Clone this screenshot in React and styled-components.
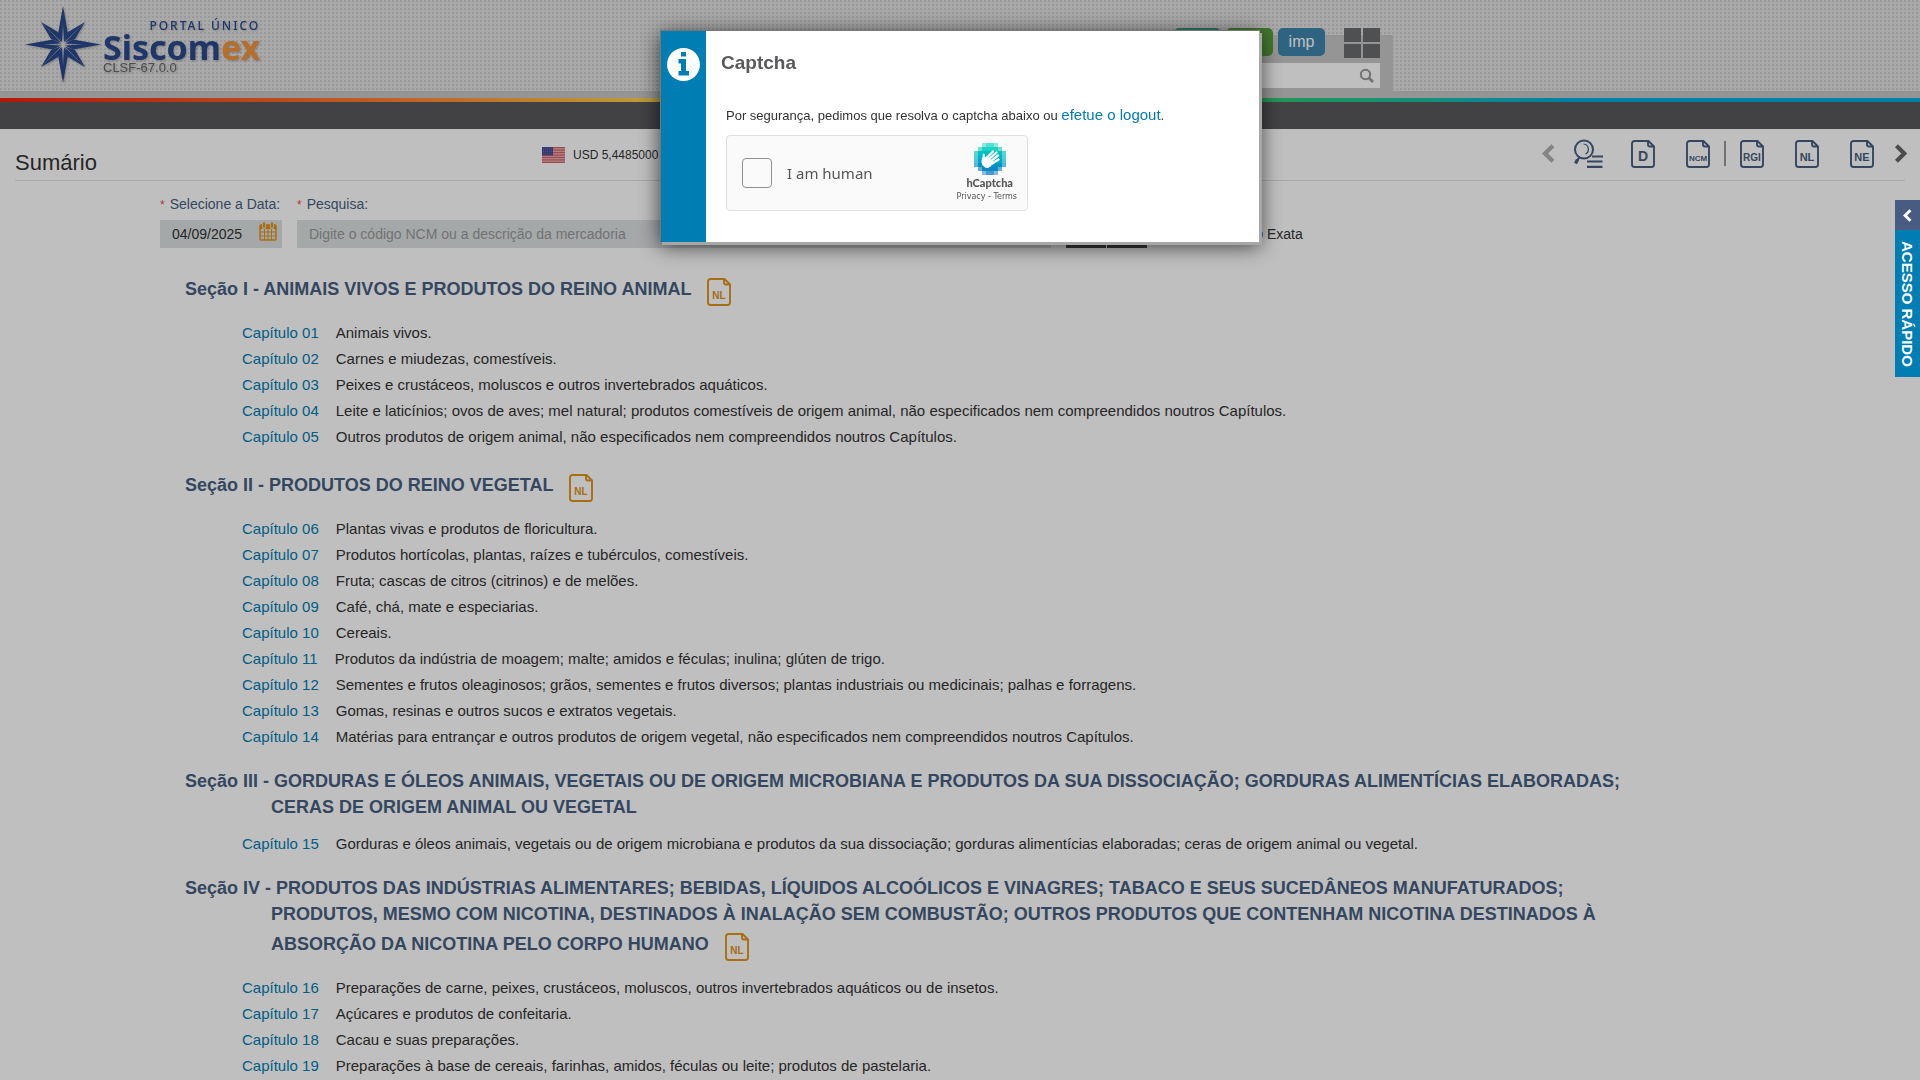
import React from "react";
import styled, { createGlobalStyle } from "styled-components";

const Global = createGlobalStyle`
  * { box-sizing: border-box; }
  body {
    margin: 0;
    background: #fff;
    color: #333;
    font-family: "Liberation Sans", Arial, sans-serif;
    font-size: 15px;
    line-height: 26px;
  }
  html, body { height: 100%; overflow: hidden; }
  h1, h2, p, ul { margin: 0; padding: 0; }
  a { text-decoration: none; }
  button { border: 0; padding: 0; background: none; font: inherit; cursor: pointer; }
`;

const navy = "#475f80";
const blue = "#007db2";
const orange = "#e0931a";

/* ---------- header ---------- */

const Header = styled.header`
  display: flex;
  justify-content: space-between;
  align-items: flex-end;
  height: 98px;
  padding-right: 527px;
  border-bottom: 7px solid #c7c7c7;
  background: conic-gradient(transparent 75%, #cccccc 0) 0 0 / 4px 4px #e2e2e2;
`;

const Brand = styled.a`
  display: flex;
  align-self: flex-start;
  padding: 4px 0 0 23px;
  filter: drop-shadow(1px 1px 1px rgba(0, 0, 0, 0.25));
`;

const BrandText = styled.span`
  display: flex;
  flex-direction: column;
  align-items: flex-start;
  font-family: "Noto Sans", sans-serif;
`;

const Portal = styled.span`
  align-self: flex-end;
  margin-top: 14px;
  font-size: 12px;
  line-height: 16px;
  letter-spacing: 2px;
  font-weight: 500;
  color: #28488c;
`;

const Wordmark = styled.span`
  font-size: 34px;
  line-height: 26px;
  font-weight: 700;
  color: #28488c;
`;

const Accent = styled.span`
  color: #f2943a;
`;

const Version = styled.span`
  font-family: "Liberation Sans", Arial, sans-serif;
  font-size: 13px;
  line-height: 16px;
  color: #666;
`;

const HeaderTools = styled.div`
  display: flex;
  flex-direction: column;
  width: 260px;
  height: 56px;
  padding: 0 13px 3px 0;
  background: #c7c7c7;
`;

const HeaderButtons = styled.div`
  display: flex;
  justify-content: flex-end;
  align-items: flex-start;
  gap: 5px;
  height: 35px;
  margin-top: -7px;
`;

const ProfileButton = styled.button`
  width: 47px;
  height: 28px;
  border-radius: 5px;
  background: ${(p) => p.$color};
  color: #fff;
  font-size: 16px;
  line-height: 28px;
`;

const AppsButton = styled.button`
  display: grid;
  grid-template-columns: 17px 17px;
  gap: 2px;
  margin-left: 14px;
`;

const AppsCell = styled.span`
  height: 14px;
  background: #6a6b6d;
`;

const HeaderSearch = styled.label`
  display: flex;
  align-items: center;
  height: 25px;
  padding-right: 6px;
  background: #fff;
`;

const HeaderInput = styled.input`
  flex: 1;
  min-width: 0;
  border: 0;
  outline: 0;
  background: transparent;
`;

const Rainbow = styled.div`
  height: 4px;
  background: linear-gradient(
    90deg,
    #f1200f 0%,
    #ff8434 21%,
    #fcd14b 34%,
    #8fc94a 50%,
    #2fc770 66%,
    #1cc1a5 74%,
    #00acdf 82%,
    #00acdf 100%
  );
`;

const NavBar = styled.nav`
  height: 27px;
  background: #59595c;
`;

/* ---------- title bar ---------- */

const TitleBar = styled.div`
  display: flex;
  align-items: center;
  height: 52px;
  margin: 0 15px;
  border-bottom: 1px solid #dfdfdf;
`;

const Title = styled.h1`
  flex: 0 0 527px;
  padding-top: 16px;
  font-size: 22px;
  line-height: 26px;
  font-weight: 400;
`;

const Currency = styled.span`
  display: flex;
  align-items: center;
  gap: 8px;
  font-size: 12px;
`;

const Toolbar = styled.div`
  display: flex;
  align-items: center;
  gap: 31px;
  margin: 0 -2px 2px auto;
`;

const ToolGroup = styled.div`
  display: flex;
  align-items: center;
  gap: ${(p) => p.$gap}px;
`;

const ToolButton = styled.button`
  display: flex;
`;

const Separator = styled.span`
  width: 2px;
  height: 25px;
  background: #999;
`;

/* ---------- search form ---------- */

const Main = styled.main`
  padding: 0 160px;
`;

const Form = styled.form`
  display: flex;
  align-items: flex-end;
  gap: 15px;
  padding-top: 10px;
`;

const Field = styled.div`
  display: flex;
  flex-direction: column;
  width: ${(p) => p.$width};
`;

const Label = styled.label`
  padding-bottom: 2px;
  font-size: 14px;
  color: ${navy};
`;

const Required = styled.span`
  margin-right: 5px;
  font-size: 12px;
  color: #f04a50;
`;

const InputBox = styled.div`
  display: flex;
  align-items: center;
  height: 28px;
  padding: 0 5px 0 12px;
  background: #dde0e2;
`;

const Input = styled.input`
  flex: 1;
  min-width: 0;
  padding: 0;
  border: 0;
  outline: 0;
  background: transparent;
  color: #333;
  font: 14px "Liberation Sans", Arial, sans-serif;
  &::placeholder { color: #999; opacity: 1; }
`;

const CalendarButton = styled.button`
  display: flex;
  align-self: flex-start;
  padding-top: 2px;
`;

const FormButtons = styled.div`
  display: flex;
  gap: 1px;
`;

const FormButton = styled.button`
  width: 40px;
  height: 28px;
  background: #45464a;
`;

const Exact = styled.label`
  display: flex;
  align-items: center;
  gap: 4px;
  height: 28px;
  margin-left: 88px;
  font-size: 14px;
`;

const Radio = styled.input`
  width: 13px;
  height: 13px;
  margin: 0;
  accent-color: #0075ff;
`;

/* ---------- summary ---------- */

const Sections = styled.div`
  padding: 24px 110px 0 25px;
`;

const Section = styled.section`
  padding-bottom: 18px;
`;

const SectionTitle = styled.h2`
  padding-left: 86px;
  text-indent: -86px;
  padding-bottom: 11px;
  font-size: 18px;
  line-height: 26px;
  color: ${navy};
`;

const NoteButton = styled.button`
  height: 28px;
  margin: 6px 0 3px 16px;
  vertical-align: -11px;
  text-indent: 0;
  line-height: 0;
`;

const Chapters = styled.ul`
  padding-left: 57px;
  list-style: none;
`;

const ChapterLink = styled.a`
  margin-right: 17px;
  color: ${blue};
`;

/* ---------- overlays ---------- */

const Overlay = styled.div`
  position: fixed;
  inset: 0;
  display: flex;
  justify-content: center;
  align-items: flex-start;
  padding-top: 30px;
  background: rgba(0, 0, 0, 0.25);
`;

const Dialog = styled.div`
  display: flex;
  width: 600px;
  border: 1px solid #777;
  border-right-color: #a7a7a7;
  border-bottom: 0;
  background: #fff;
  box-shadow: 2px 3px 0 #a7a7a7, 0 4px 20px rgba(0, 0, 0, 0.7);
`;

const DialogStripe = styled.div`
  flex: 0 0 45px;
  display: flex;
  justify-content: center;
  padding-top: 17px;
  background: ${blue};
`;

const DialogBody = styled.div`
  flex: 1;
  padding: 19px 15px 31px;
`;

const DialogTitle = styled.h2`
  font-size: 19px;
  line-height: 26px;
  color: #58595b;
`;

const DialogContent = styled.div`
  padding: 26px 5px 0;
`;

const DialogText = styled.p`
  padding-bottom: 6px;
  font-size: 13px;
  line-height: 26px;
`;

const LogoutLink = styled.a`
  font-size: 15px;
  color: ${blue};
`;

const Captcha = styled.div`
  display: flex;
  align-items: center;
  width: 302px;
  height: 76px;
  padding: 0 10px 0 15px;
  border: 1px solid #e0e0e0;
  border-radius: 4px;
  background: #fafafa;
  color: #555;
`;

const CaptchaCheck = styled.input`
  appearance: none;
  width: 30px;
  height: 30px;
  margin: 0 15px 0 0;
  border: 1px solid #919191;
  border-radius: 4px;
  background: #fafafa;
`;

const CaptchaLabel = styled.label`
  flex: 1;
  font-family: "Noto Sans", sans-serif;
  font-size: 15px;
`;

const CaptchaBrand = styled.div`
  display: flex;
  flex-direction: column;
  align-items: center;
  font-family: "DejaVu Sans", sans-serif;
  font-size: 8px;
  line-height: 12px;
`;

const CaptchaLogo = styled.a`
  display: flex;
  flex-direction: column;
  align-items: center;
  padding-left: 6px;
  color: #555;
`;

const CaptchaName = styled.strong`
  font-family: Lato, sans-serif;
  font-weight: 900;
  font-size: 11px;
  line-height: 16px;
`;

const CaptchaLink = styled.a`
  color: #555;
`;

const QuickAccess = styled.aside`
  position: fixed;
  top: 200px;
  right: 0;
  display: flex;
  flex-direction: column;
  width: 25px;
`;

const QuickToggle = styled.button`
  display: flex;
  align-items: center;
  justify-content: center;
  height: 30px;
  background: #475c80;
`;

const QuickLabel = styled.button`
  height: 147px;
  background: ${blue};
  color: #fff;
  font-size: 15px;
  line-height: 26px;
  font-weight: 700;
  writing-mode: vertical-rl;
`;

/* ---------- drawings ---------- */

const Star = () => (
  <svg width="80" height="80" viewBox="0 0 80 80" fill="#28488c" aria-hidden="true">
    <path d="M40 2 45 30 41 38 40 20 39 38 35 30ZM40 79 45 51 41 43 40 62 39 43 35 51ZM2 40.500 30 35.500 38 39.500 20 40.500 38 41.500 30 45.500ZM78 40.500 50 35.500 42 39.500 60 40.500 42 41.500 50 45.500Z" />
    <path d="M18 18 35 28 38.500 38ZM18 18 28 35 38 38.500ZM62 18 45 28 41.500 38ZM62 18 52 35 42 38.500ZM18 63 35 53 38.500 43ZM18 63 28 46 38 42.500ZM62 63 45 53 41.500 43ZM62 63 52 46 42 42.500Z" />
  </svg>
);

const Glass = () => (
  <svg width="15" height="15" viewBox="0 0 15 15" fill="none" stroke="#999" strokeWidth="2" aria-hidden="true">
    <circle cx="6.500" cy="6.500" r="4.700" />
    <path d="M10 10l4 4" strokeWidth="2.600" />
  </svg>
);

const Flag = () => (
  <svg width="23" height="16" viewBox="0 0 23 16" aria-hidden="true">
    <rect width="23" height="16" fill="#e6b4b8" />
    {[0, 1, 2, 3, 4, 5, 6].map((i) => (
      <rect key={i} y={i * 2.46} width="23" height="1.230" fill="#d9606a" />
    ))}
    <rect width="11" height="8.500" fill="#4a4d94" />
    <path d="M1 2h9M1 4.300h9M1 6.600h9" stroke="#7c7fb8" strokeWidth="0.700" strokeDasharray="1 1" />
  </svg>
);

const Chevron = ({ size, color, left }) => (
  <svg width={size * 0.65} height={size} viewBox="0 0 13 20" fill="none" stroke={color} strokeWidth="4.500" aria-hidden="true">
    <path d={left ? "M11.500 1.800 3.200 10l8.300 8.200" : "M1.500 1.800 9.800 10l-8.300 8.200"} />
  </svg>
);

const ListSearch = () => (
  <svg width="29" height="30" viewBox="0 0 29 30" fill="none" stroke={navy} aria-hidden="true">
    <circle cx="10" cy="10.500" r="9" strokeWidth="2" />
    <path d="M9.500 5a5.300 5.300 0 0 1 2 10" strokeWidth="1.200" />
    <path d="M5.500 18 3 22" strokeWidth="2.200" />
    <path d="M3.500 20.500 1.500 24.500" strokeWidth="3.200" />
    <path d="M18 17.500h11M13 22.500h15.500M13 27.800h15.500" strokeWidth="2.200" />
  </svg>
);

const Doc = ({ text, size = 10, color = navy }) => (
  <svg width="24" height="28" viewBox="0 0 24 28" fill="none" stroke={color} strokeWidth="1.900" aria-hidden="true">
    <path d="M3.500 1H17.500L23 6.500V24.500a2.500 2.500 0 0 1-2.500 2.500h-17A2.500 2.500 0 0 1 1 24.500v-21A2.500 2.500 0 0 1 3.500 1ZM17 1v3.500a2 2 0 0 0 2 2h4" />
    <text
      x="12"
      y={size > 12 ? 21 : 20.5}
      textAnchor="middle"
      fill={color}
      stroke="none"
      fontFamily="Liberation Sans, Arial, sans-serif"
      fontWeight="700"
      fontSize={size}
    >
      {text}
    </text>
  </svg>
);

const Calendar = () => (
  <svg width="18" height="19" viewBox="0 0 18 19" fill="none" stroke={orange} aria-hidden="true">
    <rect x="1" y="3" width="16" height="15" rx="1" strokeWidth="1.500" />
    <path d="M1 5h16" strokeWidth="4" />
    <path d="M1 10h16M1 14h16M5.500 7v11M9 7v11M12.500 7v11" />
    <path d="M5 1v4M13 1v4" stroke="#dde0e2" strokeWidth="4" strokeLinecap="round" />
    <path d="M5 1.500v3M13 1.500v3" strokeWidth="2.400" strokeLinecap="round" />
  </svg>
);

const Info = () => (
  <svg width="33" height="33" viewBox="0 0 33 33" aria-hidden="true">
    <circle cx="16.500" cy="16.500" r="16.500" fill="#fff" />
    <path d="M14 4h5v4.500h-5ZM11.500 11H19v12h3v4.500H11.500V23H14v-7.500h-2.500Z" fill={blue} />
  </svg>
);

const rows = [
  [2, 4], [1, 6], [0, 8], [0, 8], [0, 8], [0, 8], [1, 6], [2, 4],
];
const rowColors = ["#4fe0d2", "#1fd0c6", "#00c0c0", "#00b5c4", "#00a6c8", "#0094c4", "#0f88c2", "#4a9ad2"];

const HLogo = () => (
  <svg width="32" height="32" viewBox="0 0 32 32" shapeRendering="crispEdges" aria-hidden="true">
    {rows.map(([x, w], y) => (
      <g key={y} fill={rowColors[y]}>
        <rect x={x * 4} y={y * 4} width="4" height="4" opacity="0.65" />
        <rect x={(x + w - 1) * 4} y={y * 4} width="4" height="4" opacity="0.65" />
        <rect x={x * 4 + 4} y={y * 4} width={w * 4 - 8} height="4" />
      </g>
    ))}
    <g
      shapeRendering="auto"
      fill="none"
      stroke="#fff"
      strokeWidth="2.300"
      strokeLinecap="round"
    >
      <path d="M12 15.500 19 8.500M14 17 22.500 9.500M16 19 24 12.500M17.500 21 24.500 16.500M9.500 18 9.800 12" />
      <path d="M9 15 14 14.500 18.500 19 17 22.500Q14.500 25.500 11 24Q7.500 22 8 17.500Z" fill="#fff" strokeWidth="1" />
    </g>
  </svg>
);

/* ---------- data ---------- */

const summary = [
  {
    title: "Seção I - ANIMAIS VIVOS E PRODUTOS DO REINO ANIMAL",
    note: true,
    chapters: [
      ["01", "Animais vivos."],
      ["02", "Carnes e miudezas, comestíveis."],
      ["03", "Peixes e crustáceos, moluscos e outros invertebrados aquáticos."],
      ["04", "Leite e laticínios; ovos de aves; mel natural; produtos comestíveis de origem animal, não especificados nem compreendidos noutros Capítulos."],
      ["05", "Outros produtos de origem animal, não especificados nem compreendidos noutros Capítulos."],
    ],
  },
  {
    title: "Seção II - PRODUTOS DO REINO VEGETAL",
    note: true,
    chapters: [
      ["06", "Plantas vivas e produtos de floricultura."],
      ["07", "Produtos hortícolas, plantas, raízes e tubérculos, comestíveis."],
      ["08", "Fruta; cascas de citros (citrinos) e de melões."],
      ["09", "Café, chá, mate e especiarias."],
      ["10", "Cereais."],
      ["11", "Produtos da indústria de moagem; malte; amidos e féculas; inulina; glúten de trigo."],
      ["12", "Sementes e frutos oleaginosos; grãos, sementes e frutos diversos; plantas industriais ou medicinais; palhas e forragens."],
      ["13", "Gomas, resinas e outros sucos e extratos vegetais."],
      ["14", "Matérias para entrançar e outros produtos de origem vegetal, não especificados nem compreendidos noutros Capítulos."],
    ],
  },
  {
    title: "Seção III - GORDURAS E ÓLEOS ANIMAIS, VEGETAIS OU DE ORIGEM MICROBIANA E PRODUTOS DA SUA DISSOCIAÇÃO; GORDURAS ALIMENTÍCIAS ELABORADAS; CERAS DE ORIGEM ANIMAL OU VEGETAL",
    chapters: [
      ["15", "Gorduras e óleos animais, vegetais ou de origem microbiana e produtos da sua dissociação; gorduras alimentícias elaboradas; ceras de origem animal ou vegetal."],
    ],
  },
  {
    title: "Seção IV - PRODUTOS DAS INDÚSTRIAS ALIMENTARES; BEBIDAS, LÍQUIDOS ALCOÓLICOS E VINAGRES; TABACO E SEUS SUCEDÂNEOS MANUFATURADOS; PRODUTOS, MESMO COM NICOTINA, DESTINADOS À INALAÇÃO SEM COMBUSTÃO; OUTROS PRODUTOS QUE CONTENHAM NICOTINA DESTINADOS À ABSORÇÃO DA NICOTINA PELO CORPO HUMANO",
    note: true,
    chapters: [
      ["16", "Preparações de carne, peixes, crustáceos, moluscos, outros invertebrados aquáticos ou de insetos."],
      ["17", "Açúcares e produtos de confeitaria."],
      ["18", "Cacau e suas preparações."],
      ["19", "Preparações à base de cereais, farinhas, amidos, féculas ou leite; produtos de pastelaria."],
    ],
  },
];

export default function App() {
  return (
    <>
      <Global />
      <Header>
        <Brand href="#">
          <Star />
          <BrandText>
            <Portal>PORTAL ÚNICO</Portal>
            <Wordmark>Siscom<Accent>ex</Accent></Wordmark>
            <Version>CLSF-67.0.0</Version>
          </BrandText>
        </Brand>
        <HeaderTools>
          <HeaderButtons>
            <ProfileButton $color="#3f9f8a" aria-label="Trânsito" />
            <ProfileButton $color="#59a03c" aria-label="Exportação" />
            <ProfileButton $color="#3e86ad">imp</ProfileButton>
            <AppsButton aria-label="Aplicativos">
              <AppsCell /><AppsCell /><AppsCell /><AppsCell />
            </AppsButton>
          </HeaderButtons>
          <HeaderSearch>
            <HeaderInput aria-label="Buscar" />
            <Glass />
          </HeaderSearch>
        </HeaderTools>
      </Header>
      <Rainbow />
      <NavBar />

      <TitleBar>
        <Title>Sumário</Title>
        <Currency><Flag />USD 5,4485000</Currency>
        <Toolbar>
          <ToolGroup $gap={28}>
            <ToolGroup $gap={19}>
              <ToolButton aria-label="Anterior"><Chevron size={19} color="#b0b0b0" left /></ToolButton>
              <ToolButton aria-label="Pesquisar"><ListSearch /></ToolButton>
            </ToolGroup>
            <ToolButton aria-label="D"><Doc text="D" size={14} /></ToolButton>
          </ToolGroup>
          <ToolGroup $gap={14}>
            <ToolButton aria-label="NCM"><Doc text="NCM" size={8} /></ToolButton>
            <Separator />
            <ToolButton aria-label="RGI"><Doc text="RGI" size={10} /></ToolButton>
          </ToolGroup>
          <ToolButton aria-label="NL"><Doc text="NL" size={11} /></ToolButton>
          <ToolGroup $gap={21}>
            <ToolButton aria-label="NE"><Doc text="NE" size={11} /></ToolButton>
            <ToolButton aria-label="Próximo"><Chevron size={19} color="#666" /></ToolButton>
          </ToolGroup>
        </Toolbar>
      </TitleBar>

      <Main>
        <Form>
          <Field $width="122px">
            <Label htmlFor="data"><Required>*</Required>Selecione a Data:</Label>
            <InputBox>
              <Input id="data" defaultValue="04/09/2025" />
              <CalendarButton type="button" aria-label="Calendário"><Calendar /></CalendarButton>
            </InputBox>
          </Field>
          <Field $width="754px">
            <Label htmlFor="pesquisa"><Required>*</Required>Pesquisa:</Label>
            <InputBox>
              <Input id="pesquisa" placeholder="Digite o código NCM ou a descrição da mercadoria" />
            </InputBox>
          </Field>
          <FormButtons>
            <FormButton type="button" aria-label="Pesquisar" />
            <FormButton type="button" aria-label="Limpar" />
          </FormButtons>
          <Exact><Radio type="radio" name="modo" defaultChecked />Exata</Exact>
        </Form>

        <Sections>
          {summary.map((s) => (
            <Section key={s.title}>
              <SectionTitle>
                {s.title}
                {s.note && (
                  <NoteButton aria-label="Notas legais">
                    <Doc text="NL" color={orange} />
                  </NoteButton>
                )}
              </SectionTitle>
              <Chapters>
                {s.chapters.map(([n, text]) => (
                  <li key={n}><ChapterLink href="#">Capítulo {n}</ChapterLink>{text}</li>
                ))}
              </Chapters>
            </Section>
          ))}
        </Sections>
      </Main>

      <Overlay>
        <Dialog role="dialog" aria-labelledby="captcha-title">
          <DialogStripe><Info /></DialogStripe>
          <DialogBody>
            <DialogTitle id="captcha-title">Captcha</DialogTitle>
            <DialogContent>
              <DialogText>
                Por segurança, pedimos que resolva o captcha abaixo ou <LogoutLink href="#">efetue o logout</LogoutLink>.
              </DialogText>
              <Captcha>
                <CaptchaCheck type="checkbox" id="human" />
                <CaptchaLabel htmlFor="human">I am human</CaptchaLabel>
                <CaptchaBrand>
                  <CaptchaLogo href="#">
                    <HLogo />
                    <CaptchaName>hCaptcha</CaptchaName>
                  </CaptchaLogo>
                  <span><CaptchaLink href="#">Privacy</CaptchaLink> - <CaptchaLink href="#">Terms</CaptchaLink></span>
                </CaptchaBrand>
              </Captcha>
            </DialogContent>
          </DialogBody>
        </Dialog>
      </Overlay>

      <QuickAccess>
        <QuickToggle aria-label="Abrir"><Chevron size={13} color="#fff" left /></QuickToggle>
        <QuickLabel>ACESSO RÁPIDO</QuickLabel>
      </QuickAccess>
    </>
  );
}
